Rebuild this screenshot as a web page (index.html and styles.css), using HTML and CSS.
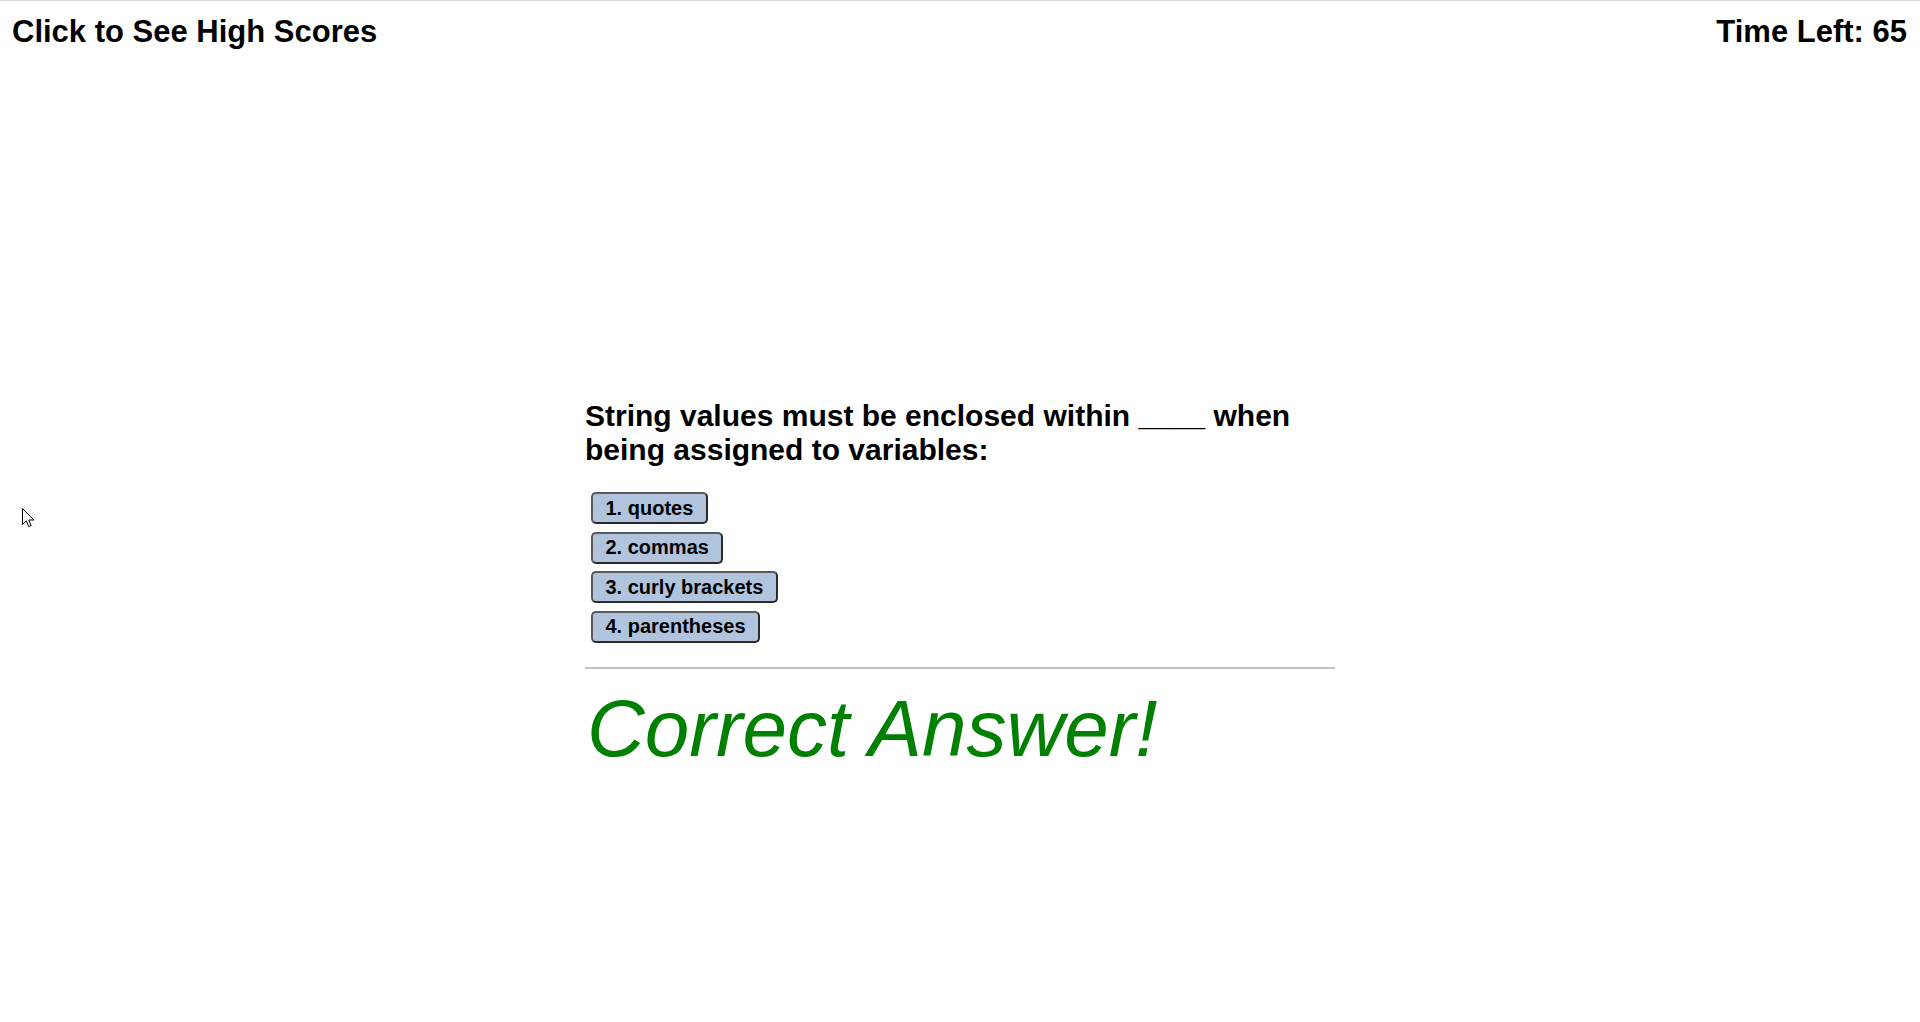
FILE: index.html
```html
<!DOCTYPE html>
<html lang="en">
<head>
<meta charset="utf-8">
<title>Code Quiz</title>
<link rel="stylesheet" href="styles.css">
</head>
<body>
<header class="header">
  <a class="high-scores">Click to See High Scores</a>
  <div class="timer">Time Left: <span>65</span></div>
</header>
<main class="quiz">
  <h2 class="question">String values must be enclosed within ____ when being assigned to variables:</h2>
  <div class="choices">
    <button class="choice">1. quotes</button>
    <button class="choice">2. commas</button>
    <button class="choice">3. curly brackets</button>
    <button class="choice">4. parentheses</button>
  </div>
  <hr class="divider">
  <p class="result">Correct Answer!</p>
</main>
<svg class="cursor" width="13" height="20" viewBox="0 0 13 20" aria-hidden="true">
  <path d="M0.5 0.5 L0.5 16.5 L4.3 12.8 L6.8 18.6 L9.2 17.6 L6.8 12 L12 12 Z" fill="#fff" stroke="#000" stroke-width="1" stroke-linejoin="miter"/>
</svg>
</body>
</html>
```
FILE: styles.css
```css
html, body {
  margin: 0;
  padding: 0;
  background: #fff;
}
body {
  border-top: 1px solid #dcdcdc;
  font-family: "Liberation Sans", Arial, sans-serif;
  color: #000;
  min-height: 1021px;
  position: relative;
}
.header {
  display: flex;
  justify-content: space-between;
  align-items: flex-start;
  padding: 13px 13px 0 12px;
  font-size: 31px;
  font-weight: 700;
}
.high-scores {
  cursor: pointer;
}
.quiz {
  width: 750px;
  margin: 0 auto;
  padding-top: 349px;
}
.question {
  margin: 0 0 25px;
  font-size: 30px;
  font-weight: 700;
}
.choices {
  display: flex;
  flex-direction: column;
  align-items: flex-start;
  gap: 7.5px;
  padding-left: 6px;
}
.choice {
  font-family: "Liberation Sans", Arial, sans-serif;
  font-size: 20px;
  font-weight: 700;
  color: #000;
  background: #b0c4de;
  border: 2px solid #5a5a5a;
  border-right-color: #2a2a2a;
  border-bottom-color: #2a2a2a;
  border-radius: 5px;
  padding: 2.5px 12.5px;
  line-height: 23px;
}
.divider {
  margin: 24px 0 0;
  height: 0;
  border: 0;
  border-top: 2px solid #c3c3c3;
}
.result {
  margin: 14px 0 0;
  padding-left: 2px;
  font-size: 80px;
  font-style: italic;
  color: #008000;
}
.cursor {
  position: absolute;
  left: 22px;
  top: 507px;
}
```
